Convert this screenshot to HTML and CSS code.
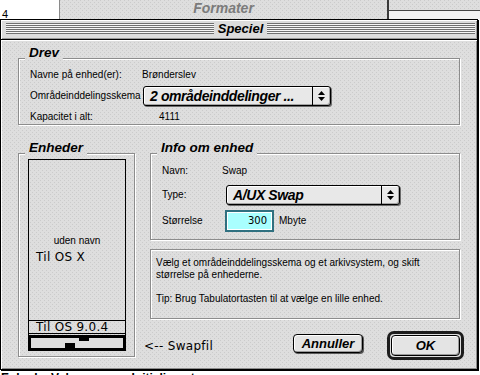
FILE: index.html
```html
<!DOCTYPE html>
<html lang="da">

<head>
	<meta charset="UTF-8">
	<title>Speciel</title>
	<link rel="stylesheet" href="styles.css">
</head>

<body>
	<div class="desk">
		<span class="num">4</span>
		<div class="back-win pat"><span class="back-title">Formater</span></div>
		<div class="side-win">
			<div class="side-top pat"></div>
		</div>
		<div class="under">Enhed&nbsp;&nbsp;&nbsp;&nbsp;Volumenavn&nbsp;&nbsp;&nbsp;Initialiseret</div>

		<div class="dialog">
			<div class="titlebar">
				<div class="stripes"></div>
				<span class="title">Speciel</span>
				<div class="stripes"></div>
			</div>

			<div class="body pat">
				<!-- Drev -->
				<div class="group">
					<div class="group-title pat">Drev</div>
					<div class="drev-rows">
						<span>Navne på enhed(er):</span>
						<span>Brønderslev</span>
						<span>Områdeinddelingsskema</span>
						<div class="popup popup-drev">
							<span class="popup-text">2 områdeinddelinger ...</span>
							<span class="popup-arrow">
								<svg width="7" height="10" viewBox="0 0 7 10"><path d="M3.5 0 7 4H0zM0 6h7l-3.5 4z" /></svg>
							</span>
						</div>
						<span>Kapacitet i alt:</span>
						<span class="cap">4111</span>
					</div>
				</div>

				<div class="lower">
					<!-- Enheder -->
					<div class="group">
						<div class="group-title pat">Enheder</div>
						<div class="map">
							<div class="part part-main">
								<div class="part-name">uden navn</div>
								<div class="part-os">Til OS X</div>
							</div>
							<div class="part part-os9">Til OS 9.0.4</div>
							<svg class="part-swap" width="96" height="15" viewBox="0 0 96 15">
								<rect x="0" y="0" width="96" height="15" fill="#000" />
								<rect x="2" y="3" width="92" height="10" fill="#dedede" />
								<rect x="50" y="3" width="10" height="3" fill="#000" />
								<rect x="36" y="8" width="10" height="5" fill="#000" />
							</svg>
						</div>
					</div>

					<div class="right">
						<!-- Info om enhed -->
						<div class="group">
							<div class="group-title pat">Info om enhed</div>
							<div class="info-rows">
								<div class="row row-name">
									<span class="lbl">Navn:</span>
									<span>Swap</span>
								</div>
								<div class="row row-type">
									<span class="lbl">Type:</span>
									<div class="popup popup-type">
										<span class="popup-text">A/UX Swap</span>
										<span class="popup-arrow">
											<svg width="7" height="10" viewBox="0 0 7 10"><path d="M3.5 0 7 4H0zM0 6h7l-3.5 4z" /></svg>
										</span>
									</div>
								</div>
								<div class="row row-size">
									<span class="lbl">Størrelse</span>
									<span class="field">300</span>
									<span class="unit">Mbyte</span>
								</div>
							</div>
						</div>

						<div class="group help">
							<p>Vælg et områdeinddelingsskema og et arkivsystem, og skift størrelse på enhederne.</p>
							<p>Tip: Brug Tabulatortasten til at vælge en lille enhed.</p>
						</div>

						<div class="actions">
							<span class="swapfil">&lt;-- Swapfil</span>
							<a href="#" class="btn btn-cancel">Annuller</a>
							<span class="btn-ring"><a href="#" class="btn btn-ok">OK</a></span>
						</div>
					</div>
				</div>
			</div>
		</div>
	</div>
</body>

</html>
```

FILE: styles.css
```css
html,
body {
	margin: 0;
	padding: 0;
}

body {
	width: 480px;
	height: 375px;
	overflow: hidden;
	background: #fff;
	color: #000;
	font: 10px/12px "Liberation Sans", sans-serif;
}

/* Mac OS grey with its dot pattern, pinned to the window so all pieces line up */
.pat {
	background:
		conic-gradient(from 270deg at 1px 1px, #cbcbcb 25%, transparent 0) 0 0 / 4px 4px fixed,
		conic-gradient(from 270deg at 1px 1px, #cbcbcb 25%, transparent 0) 2px 2px / 4px 4px fixed,
		#dedede;
}

.desk {
	position: relative;
	width: 480px;
	height: 375px;
	overflow: hidden;
}

/* windows behind the dialog */
.num {
	position: absolute;
	left: 2px;
	top: 8px;
	font: 11px/12px "Liberation Sans", sans-serif;
}

.back-win {
	position: absolute;
	left: 59px;
	top: 0;
	width: 327px;
	height: 19px;
	border-left: 1px solid #8a8a8a;
	border-right: 2px solid #3a3a3a;
	text-align: center;
}

.back-title {
	font: italic bold 14px/16px "Liberation Sans", sans-serif;
	color: #7b7b7b;
}

.side-win {
	position: absolute;
	left: 389px;
	top: 0;
	width: 91px;
	height: 19px;
	background: #f2f2f2;
}

.side-top {
	height: 10px;
	border-bottom: 1px solid #444;
}

.under {
	position: absolute;
	left: 1px;
	top: 371px;
	font: bold 12px/14px "Liberation Sans", sans-serif;
	white-space: nowrap;
}

/* dialog */
.dialog {
	position: absolute;
	left: 0;
	top: 19px;
	width: 476px;
	border: 1px solid #000;
	box-shadow: 1px 1px 0 #000;
	background: #dedede;
}

.titlebar {
	display: flex;
	align-items: flex-start;
	box-sizing: border-box;
	height: 20px;
	padding: 3px 2px 0 5px;
	border-bottom: 1px solid #000;
	background: #dcdcdc;
	box-shadow: inset 1px 1px 0 #fff, inset -1px -1px 0 #999;
}

.stripes {
	flex: 1;
	height: 11px;
	background: repeating-linear-gradient(#707070 0 1px, #f6f6f6 1px 2px);
}

.title {
	padding: 0 4px;
	margin-top: -2px;
	font: italic bold 13px/16px "Liberation Sans", sans-serif;
}

.body {
	box-sizing: border-box;
	height: 329px;
	padding: 18px 17px 0;
	box-shadow: inset 1px 1px 0 #fff, inset -1px -1px 0 #8c8c8c;
}

.group {
	border: 1px solid #8c8c8c;
	box-shadow: 1px 1px 0 #fff, inset 1px 1px 0 #fff;
}

.group-title {
	width: max-content;
	margin: -13px 0 0 6px;
	padding: 0 4px;
	font: italic bold 13.5px/14px "Liberation Sans", sans-serif;
}

.drev-rows {
	display: grid;
	grid-template-columns: 112px auto;
	grid-template-rows: 12px 20px 12px;
	row-gap: 5px;
	align-items: center;
	justify-items: start;
	margin-top: 9px;
	padding: 0 0 1px 11px;
}

.popup-drev {
	width: 188px;
	margin-left: 1px;
}

.cap {
	padding-left: 17px;
}

.popup {
	display: flex;
	box-sizing: border-box;
	height: 20px;
	border: 1px solid #000;
	border-radius: 3px;
	background: #e8e8e8;
	box-shadow: inset 1px 1px 0 #fff, inset -1px -1px 0 #a4a4a4, 1px 1px 0 #6c6c6c;
}

.popup-text {
	flex: 1;
	padding-left: 6px;
	font: italic bold 14px/18px "Liberation Sans", sans-serif;
	letter-spacing: -0.4px;
	white-space: nowrap;
	overflow: hidden;
}

.popup-arrow {
	display: flex;
	align-items: center;
	justify-content: center;
	width: 17px;
	border-left: 1px solid #000;
}

.lower {
	display: grid;
	grid-template-columns: 117px 310px;
	column-gap: 15px;
	align-items: start;
	margin-top: 28px;
}

/* partition map */
.map {
	box-sizing: border-box;
	width: 98px;
	height: 192px;
	margin: 4px 0 5px 9px;
	border: 1px solid #000;
}

.part {
	border-bottom: 1px solid #000;
}

.part-main {
	box-sizing: border-box;
	height: 161px;
	padding-top: 75px;
}

.part-name {
	text-align: center;
}

.part-os,
.part-os9,
.swapfil {
	font: 12px/14px "DejaVu Sans", sans-serif;
	letter-spacing: 0.3px;
}

.part-os {
	padding-left: 7px;
	margin-top: 3px;
}

.part-os9 {
	height: 12px;
	margin-bottom: 1px;
	padding-left: 7px;
	line-height: 13px;
}

.part-swap {
	display: block;
}

/* info */
.info-rows {
	margin-top: 10px;
	padding: 0 0 7px 11px;
}

.row {
	display: flex;
	align-items: center;
}

.lbl {
	width: 60px;
}

.row-name {
	height: 12px;
}

.row-type {
	height: 20px;
	margin-top: 8px;
}

.row-size {
	height: 22px;
	margin-top: 5px;
}

.popup-type {
	width: 174px;
	margin-left: 4px;
}

.field {
	box-sizing: border-box;
	width: 49px;
	height: 22px;
	margin-left: 3px;
	padding-right: 5px;
	border: 2px solid #2f7080;
	background: #a9ffff;
	box-shadow: inset 0 0 0 1px #fff;
	font: 10px/18px "DejaVu Sans", sans-serif;
	text-align: right;
}

.unit {
	margin-left: 5px;
}

.help {
	box-sizing: border-box;
	height: 70px;
	margin-top: 9px;
	padding: 7px 0 0 5px;
}

.help p {
	margin: 0 0 12px;
}

.actions {
	display: flex;
	align-items: center;
	height: 29px;
	margin: 12px -4px 0 -6px;
}

.btn {
	display: flex;
	align-items: center;
	justify-content: center;
	box-sizing: border-box;
	border: 1px solid #000;
	border-radius: 4px;
	background: #e4e4e4;
	box-shadow: inset 1px 1px 0 #fff, inset -1px -1px 0 #9a9a9a;
	color: #000;
	text-decoration: none;
	font: italic bold 13px/16px "Liberation Sans", sans-serif;
}

.btn-cancel {
	width: 70px;
	height: 19px;
	margin: 0 24px 4px auto;
	box-shadow: inset 1px 1px 0 #fff, inset -1px -1px 0 #9a9a9a, 1px 1px 0 #5a5a5a;
}

.btn-ring {
	box-sizing: border-box;
	width: 77px;
	height: 29px;
	padding: 1px;
	border: 3px solid #1c1c1c;
	border-radius: 7px;
	background: #dedede;
}

.btn-ok {
	height: 100%;
}
```
